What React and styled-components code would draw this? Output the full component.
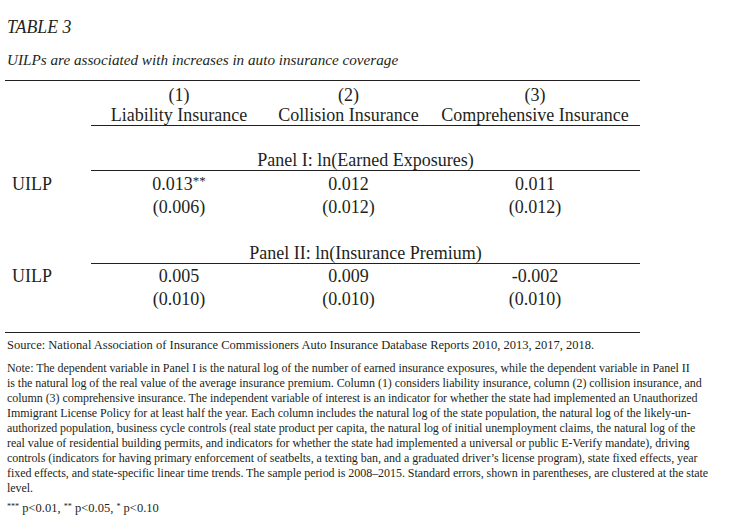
import React from 'react';
import styled, { createGlobalStyle } from 'styled-components';

const GlobalStyle = createGlobalStyle`
  html, body { margin: 0; padding: 0; background: #fff; }
  body { font-family: "Liberation Serif", "Times New Roman", serif; color: #231f20; }
`;

const columns = ['Liability Insurance', 'Collision Insurance', 'Comprehensive Insurance'];

const panels = [
  {
    title: 'Panel I: ln(Earned Exposures)',
    coef: [{ v: '0.013', stars: '**' }, { v: '0.012' }, { v: '0.011' }],
    se: ['(0.006)', '(0.012)', '(0.012)'],
  },
  {
    title: 'Panel II: ln(Insurance Premium)',
    coef: [{ v: '0.005' }, { v: '0.009' }, { v: '-0.002' }],
    se: ['(0.010)', '(0.010)', '(0.010)'],
  },
];

const noteLines = [
  'Note: The dependent variable in Panel I is the natural log of the number of earned insurance exposures, while the dependent variable in Panel II',
  'is the natural log of the real value of the average insurance premium. Column (1) considers liability insurance, column (2) collision insurance, and',
  'column (3) comprehensive insurance. The independent variable of interest is an indicator for whether the state had implemented an Unauthorized',
  'Immigrant License Policy for at least half the year. Each column includes the natural log of the state population, the natural log of the likely-un-',
  'authorized population, business cycle controls (real state product per capita, the natural log of initial unemployment claims, the natural log of the',
  'real value of residential building permits, and indicators for whether the state had implemented a universal or public E-Verify mandate), driving',
  'controls (indicators for having primary enforcement of seatbelts, a texting ban, and a graduated driver\u2019s license program), state fixed effects, year',
  'fixed effects, and state-specific linear time trends. The sample period is 2008\u20132015. Standard errors, shown in parentheses, are clustered at the state',
  'level.',
];

export default function App() {
  return (
    <>
      <GlobalStyle />
      <Page>
        <Title>TABLE 3</Title>
        <Subtitle>UILPs are associated with increases in auto insurance coverage</Subtitle>

        <Table>
          <Cell />
          {columns.map((c, i) => (
            <HeadCell key={c}>
              <div>({i + 1})</div>
              <div>{c}</div>
            </HeadCell>
          ))}

          {panels.map((p) => (
            <React.Fragment key={p.title}>
              <PanelTitle>{p.title}</PanelTitle>
              <Label>UILP</Label>
              {p.coef.map((c, i) => (
                <Cell key={i}>
                  {c.v}
                  {c.stars && <Stars>{c.stars}</Stars>}
                </Cell>
              ))}
              <Cell />
              {p.se.map((s, i) => (
                <Cell key={i}>{s}</Cell>
              ))}
            </React.Fragment>
          ))}
        </Table>

        <Notes>
          <Source>Source: National Association of Insurance Commissioners Auto Insurance Database Reports 2010, 2013, 2017, 2018.</Source>
          <Note>
            {noteLines.map((l) => (
              <Line key={l}>{l}</Line>
            ))}
          </Note>
          <Legend>
            <Stars $small>***</Stars> p&lt;0.01, <Stars $small>**</Stars> p&lt;0.05, <Stars $small>*</Stars> p&lt;0.10
          </Legend>
        </Notes>
      </Page>
    </>
  );
}

const Page = styled.div`
  width: 739px;
  height: 528px;
  box-sizing: border-box;
  padding: 17px 0 0 0;
  overflow: hidden;
`;

const Title = styled.div`
  font-style: italic;
  font-size: 17.8px;
  line-height: 20px;
  padding-left: 7px;
`;

const Subtitle = styled.div`
  font-style: italic;
  font-size: 15.2px;
  line-height: 20px;
  margin-top: 13px;
  padding-left: 7px;
`;

const Table = styled.div`
  margin: 10px 0 0 5px;
  width: 635px;
  display: grid;
  grid-template-columns: 86px 176px 163px 210px;
  border-top: 1.5px solid #231f20;
  border-bottom: 1.5px solid #231f20;
  padding: 4px 0 21px;
  font-size: 18px;
`;

const Cell = styled.div`
  text-align: center;
  line-height: 23px;
  white-space: nowrap;
`;

const HeadCell = styled.div`
  text-align: center;
  line-height: 20px;
  white-space: nowrap;
  border-bottom: 1.5px solid #231f20;
`;

const PanelTitle = styled.div`
  grid-column: 2 / 5;
  text-align: center;
  line-height: 20px;
  margin-top: 24px;
  margin-bottom: 1.5px;
  border-bottom: 1.5px solid #231f20;
`;

const Label = styled(Cell)`
  text-align: left;
  padding-left: 7px;
`;

const Stars = styled.sup`
  font-size: ${({ $small }) => ($small ? '0.65em' : '0.72em')};
  line-height: 0;
  vertical-align: 0.4em;
`;

const Notes = styled.div`
  padding: 5px 0 0 7px;
  font-size: 12.5px;
  line-height: 15px;
  white-space: nowrap;
`;

const Source = styled.div``;

const Note = styled.div`
  margin-top: 8px;
  font-size: 12px;
  letter-spacing: -0.05px;
`;

const Line = styled.div``;

const Legend = styled.div`
  margin-top: 5px;
`;
